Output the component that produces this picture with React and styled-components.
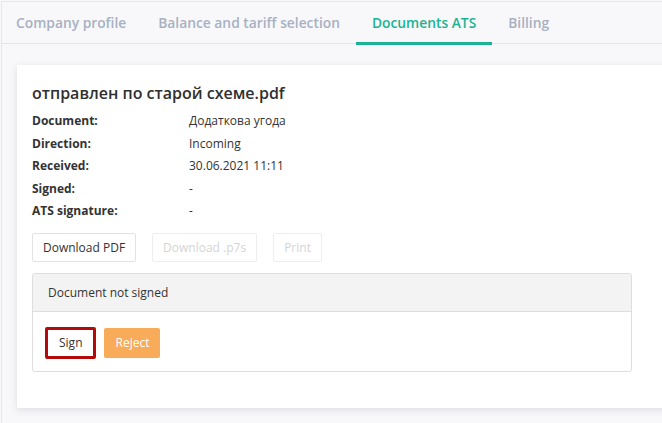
import React from "react";
import styled, { createGlobalStyle } from "styled-components";

const GlobalStyle = createGlobalStyle`
  html, body {
    margin: 0;
    padding: 0;
    background: #f8f8fa;
    overflow: hidden;
  }
  body {
    font-family: "Open Sans", "Noto Sans", sans-serif;
    color: #333;
  }
`;

const Page = styled.div`
  margin: 1px 0 0 1px;
  border-top: 1px solid #e6e6ea;
  border-left: 1px solid #e6e6ea;
  min-height: 430px;
  background: #f8f8fa;
  overflow: hidden;
`;

const Tabs = styled.nav`
  display: flex;
  height: 41px;
  border-bottom: 1px solid #e4e4ea;
  margin-left: -2px;
`;

const Tab = styled.div`
  padding: 0 16px;
  display: flex;
  align-items: center;
  font-size: 13.8px;
  font-weight: 600;
  color: ${(p) => (p.active ? "#1ab394" : "#a7b1c2")};
  border-bottom: 3px solid ${(p) => (p.active ? "#1ab394" : "transparent")};
  margin-bottom: -2px;
  white-space: nowrap;
`;

const Card = styled.section`
  margin: 21px 0 8px 15px;
  width: 700px;
  background: #fff;
  box-shadow: 0 2px 7px rgba(40, 50, 80, 0.13);
  padding: 16px 15px 36px;
  box-sizing: border-box;
`;

const Title = styled.h2`
  margin: 0 0 5px;
  font-size: 16px;
  font-weight: 600;
  color: #2f2f2f;
  line-height: 24px;
`;

const Info = styled.div`
  display: grid;
  grid-template-columns: 157px auto;
  font-size: 12px;
  line-height: 22.5px;
  color: #333;
`;

const Label = styled.div`
  font-weight: 700;
`;

const Value = styled.div``;

const Actions = styled.div`
  display: flex;
  gap: 16px;
  margin-top: 10px;
`;

const Button = styled.button`
  font-family: inherit;
  font-size: 12px;
  height: 29px;
  padding: 0 10px;
  background: #fff;
  border: 1px solid ${(p) => (p.disabled ? "#eeeeee" : "#e3e3e3")};
  color: ${(p) => (p.disabled ? "#d4d4d4" : "#333")};
  border-radius: 2px;
`;

const Panel = styled.div`
  margin-top: 11px;
  width: 600px;
  box-sizing: border-box;
  border: 1px solid #dedede;
  border-radius: 3px;
  overflow: hidden;
`;

const PanelHead = styled.div`
  background: #f3f3f3;
  border-bottom: 1px solid #dedede;
  height: 37px;
  display: flex;
  align-items: center;
  padding-left: 15px;
  font-size: 12px;
  color: #333;
`;

const PanelBody = styled.div`
  display: flex;
  align-items: center;
  gap: 8px;
  padding: 15px 12px 12px;
`;

const SignButton = styled.button`
  font-family: inherit;
  font-size: 12px;
  height: 32px;
  padding: 0 11px;
  background: #fff;
  color: #333;
  border: 3px solid #b20b0b;
  border-radius: 2px;
`;

const RejectButton = styled.button`
  font-family: inherit;
  font-size: 12px;
  height: 30px;
  padding: 0 11px;
  background: #f8ac59;
  color: #fff;
  border: none;
  border-radius: 2px;
`;

const rows = [
  ["Document:", "Додаткова угода"],
  ["Direction:", "Incoming"],
  ["Received:", "30.06.2021 11:11"],
  ["Signed:", "-"],
  ["ATS signature:", "-"],
];

export default function App() {
  return (
    <Page>
      <GlobalStyle />
      <Tabs>
        <Tab>Company profile</Tab>
        <Tab>Balance and tariff selection</Tab>
        <Tab active>Documents ATS</Tab>
        <Tab>Billing</Tab>
      </Tabs>
      <Card>
        <Title>отправлен по старой схеме.pdf</Title>
        <Info>
          {rows.map(([k, v]) => (
            <React.Fragment key={k}>
              <Label>{k}</Label>
              <Value>{v}</Value>
            </React.Fragment>
          ))}
        </Info>
        <Actions>
          <Button>Download PDF</Button>
          <Button disabled>Download .p7s</Button>
          <Button disabled>Print</Button>
        </Actions>
        <Panel>
          <PanelHead>Document not signed</PanelHead>
          <PanelBody>
            <SignButton>Sign</SignButton>
            <RejectButton>Reject</RejectButton>
          </PanelBody>
        </Panel>
      </Card>
    </Page>
  );
}
